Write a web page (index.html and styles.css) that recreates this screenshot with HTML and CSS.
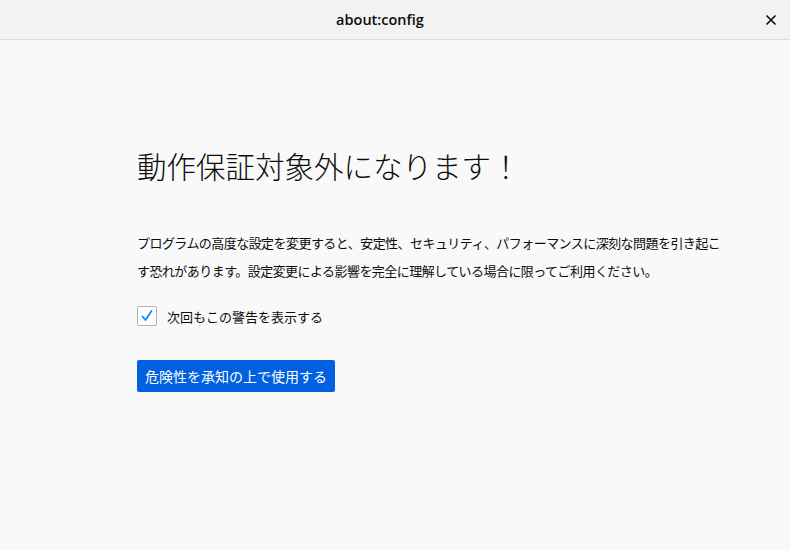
FILE: index.html
```html
<!DOCTYPE html>
<html lang="ja">
<head>
<meta charset="utf-8">
<link rel="stylesheet" href="styles.css">
</head>
<body>
<header class="titlebar">
  <div class="title">about:config</div>
  <div class="close" aria-label="閉じる">
    <svg width="12" height="12" viewBox="0 0 12 12"><path d="M1.5 1.5 L10.5 10.5 M10.5 1.5 L1.5 10.5" stroke="#0c0c0d" stroke-width="1.6" fill="none"/></svg>
  </div>
</header>
<main class="content">
  <div class="container">
    <h1 class="heading">動作保証対象外になります！</h1>
    <p class="desc">プログラムの高度な設定を変更すると、安定性、セキュリティ、パフォーマンスに深刻な問題を引き起こす恐れがあります。設定変更による影響を完全に理解している場合に限ってご利用ください。</p>
    <label class="check-row">
      <span class="checkbox">
        <svg width="14" height="14" viewBox="0 0 14 14"><path d="M2.5 7.5 L5.5 11 L11.5 2" stroke="#0a84ff" stroke-width="1.7" fill="none" stroke-linecap="round" stroke-linejoin="round"/></svg>
      </span>
      <span class="check-label">次回もこの警告を表示する</span>
    </label>
    <div class="actions">
      <button class="primary">危険性を承知の上で使用する</button>
    </div>
  </div>
</main>
</body>
</html>
```
FILE: styles.css
```css
html, body {
  margin: 0;
  padding: 0;
  height: 100%;
}
body {
  background: #f9f9fa;
  color: #0c0c0d;
  font-family: "Noto Sans CJK JP", "Noto Sans", sans-serif;
  display: flex;
  flex-direction: column;
}
.titlebar {
  height: 39px;
  background: #f2f2f2;
  border-bottom: 1px solid #dcdcdc;
  display: flex;
  align-items: center;
  justify-content: center;
  padding-right: 30px;
  position: relative;
  flex: none;
}
.title {
  font-family: "Open Sans", "Noto Sans", sans-serif;
  font-weight: 600;
  font-size: 14.5px;
  color: #0c0c0d;
}
.close {
  position: absolute;
  right: 13px;
  top: 14px;
  width: 12px;
  height: 12px;
  display: flex;
}
.content {
  flex: 1;
  padding-left: 137px;
}
.container {
  width: 592px;
  padding-top: 99px;
}
.heading {
  margin: 0;
  font-size: 29.5px;
  font-weight: 300;
  line-height: 52px;
}
.desc {
  margin: 38px 0 0;
  font-size: 13px;
  letter-spacing: -0.55px;
  line-height: 28px;
}
.check-row {
  display: flex;
  align-items: center;
  margin-top: 21px;
  gap: 10px;
}
.checkbox {
  width: 18px;
  height: 18px;
  border: 1px solid #b1b1b3;
  border-radius: 2px;
  background: #fff;
  display: flex;
  align-items: center;
  justify-content: center;
}
.check-label {
  font-size: 13px;
}
.actions {
  margin-top: 34px;
}
.primary {
  font-family: "Noto Sans CJK JP", "Noto Sans", sans-serif;
  font-size: 14px;
  color: #fff;
  background: #0060df;
  border: none;
  border-radius: 2px;
  height: 32px;
  padding: 0 8px;
}
```
